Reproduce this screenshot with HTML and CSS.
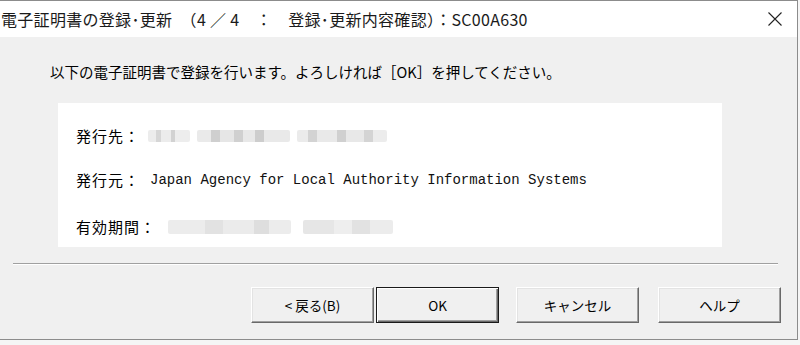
FILE: index.html
```html
<!DOCTYPE html>
<html lang="ja">
<head>
<meta charset="utf-8">
<title>電子証明書の登録・更新</title>
<link rel="stylesheet" href="styles.css">
</head>
<body>
<div class="window">
  <div class="titlebar">
    <span class="title">電子証明書の登録･更新　（4 ／ 4　：　登録･更新内容確認）：SC00A630</span>
    <span class="close" aria-label="閉じる">
      <svg width="14" height="14" viewBox="0 0 14 14"><path d="M0.5 0.5 L13.5 13.5 M13.5 0.5 L0.5 13.5" stroke="#222" stroke-width="1.1" fill="none"/></svg>
    </span>
  </div>
  <div class="body">
    <p class="message">以下の電子証明書で登録を行います。よろしければ［OK］を押してください。</p>
    <div class="panel">
      <div class="row">
        <span class="label">発行先：</span>
        <span class="blur blur-a"><i class="b1"></i><i class="b2"></i><i class="b3"></i></span>
      </div>
      <div class="row">
        <span class="label">発行元：</span>
        <span class="value">Japan Agency for Local Authority Information Systems</span>
      </div>
      <div class="row">
        <span class="label">有効期間：</span>
        <span class="blur blur-b"><i class="c1"></i><i class="c2"></i></span>
      </div>
    </div>
    <div class="separator"></div>
    <div class="buttons">
      <button class="btn">&lt; 戻る(B)</button>
      <button class="btn default">OK</button>
      <button class="btn gap">キャンセル</button>
      <button class="btn gap2">ヘルプ</button>
    </div>
  </div>
</div>
</body>
</html>
```
FILE: styles.css
```css
html, body {
  margin: 0;
  padding: 0;
  background: #f5f5f5;
}
body {
  width: 800px;
  height: 345px;
  overflow: hidden;
  font-family: "Noto Sans CJK JP", "Noto Sans", sans-serif;
  color: #000;
}
.window {
  box-sizing: border-box;
  width: 798px;
  height: 340px;
  border-top: 1px solid #8c8c8c;
  border-right: 1px solid #8c8c8c;
  border-bottom: 1px solid #8c8c8c;
  display: flex;
  flex-direction: column;
  background: #f0f0f0;
}
.titlebar {
  height: 36px;
  background: #fff;
  display: flex;
  align-items: center;
  justify-content: space-between;
  padding-left: 1px;
  padding-right: 15px;
}
.title {
  font-size: 16px;
  line-height: 20px;
  letter-spacing: 0.3px;
  color: #1a1a1a;
  white-space: nowrap;
}
.close {
  display: flex;
  width: 14px;
  height: 14px;
}
.body {
  flex: 1;
  display: flex;
  flex-direction: column;
  background: #f0f0f0;
}
.message {
  margin: 25px 0 0 50px;
  font-size: 14.5px;
  line-height: 20px;
  white-space: nowrap;
}
.panel {
  margin: 21px 0 0 58px;
  width: 664px;
  height: 144px;
  background: #fff;
  box-sizing: border-box;
  padding: 23px 0 0 18px;
  display: flex;
  flex-direction: column;
  gap: 24px;
}
.row {
  display: flex;
  align-items: center;
  height: 20px;
  white-space: nowrap;
}
.row:last-child {
  margin-top: 3px;
}
.label {
  font-size: 15px;
  letter-spacing: 1px;
  line-height: 20px;
}
.value {
  font-family: "Liberation Mono", monospace;
  font-size: 14px;
  margin-left: 10px;
  color: #111;
}
.blur {
  display: flex;
  height: 12px;
}
.blur i {
  display: block;
  height: 12px;
  margin-right: 7px;
  border-radius: 2px;
}
.blur-a {
  margin-left: 8px;
}
.b1 { width: 42px; background: linear-gradient(90deg, #ececec 0 20%, #d6d6d6 20% 30%, #ececec 30% 55%, #d2d2d2 55% 65%, #ededed 65%); }
.b2 { width: 93px; background: linear-gradient(90deg, #eaeaea 0 15%, #cfcfcf 15% 25%, #e6e6e6 25% 40%, #d0d0d0 40% 50%, #e8e8e8 50% 62%, #cdcdcd 62% 72%, #e9e9e9 72%); }
.b3 { width: 90px; background: linear-gradient(90deg, #ebebeb 0 12%, #d3d3d3 12% 22%, #e9e9e9 22% 45%, #d0d0d0 45% 55%, #e8e8e8 55% 75%, #d4d4d4 75% 85%, #ececec 85%); }
.blur-b {
  margin-left: 12px;
  height: 14px;
}
.blur-b i { height: 14px; margin-right: 12px; }
.c1 { width: 123px; background: linear-gradient(90deg, #ececec 0 30%, #e2e2e2 30% 45%, #ebebeb 45% 70%, #dedede 70% 82%, #ececec 82%); }
.c2 { width: 90px; background: linear-gradient(90deg, #e6e6e6 0 35%, #eeeeee 35% 55%, #e2e2e2 55% 75%, #ececec 75%); }
.separator {
  margin: 16px 0 0 13px;
  width: 765px;
  height: 1px;
  background: #a0a0a0;
  border-bottom: 1px solid #fff;
}
.buttons {
  display: flex;
  justify-content: flex-end;
  padding-right: 16px;
  margin-top: 22px;
}
.btn {
  box-sizing: border-box;
  width: 123px;
  height: 36px;
  margin: 0 0 0 2px;
  padding: 0;
  font-family: "Noto Sans CJK JP", sans-serif;
  font-size: 13.5px;
  color: #000;
  background: #f0f0f0;
  border: 1px solid;
  border-color: #fff #696969 #696969 #fff;
  box-shadow: inset -1px -1px 0 #a0a0a0, inset 1px 1px 0 #e3e3e3;
}
.btn.default {
  border-color: #1a1a1a;
  box-shadow: inset 1px 1px 0 #fff, inset -1px -1px 0 #696969, inset -2px -2px 0 #a0a0a0;
}
.btn.gap { margin-left: 17px; }
.btn.gap2 { margin-left: 19px; }
```
